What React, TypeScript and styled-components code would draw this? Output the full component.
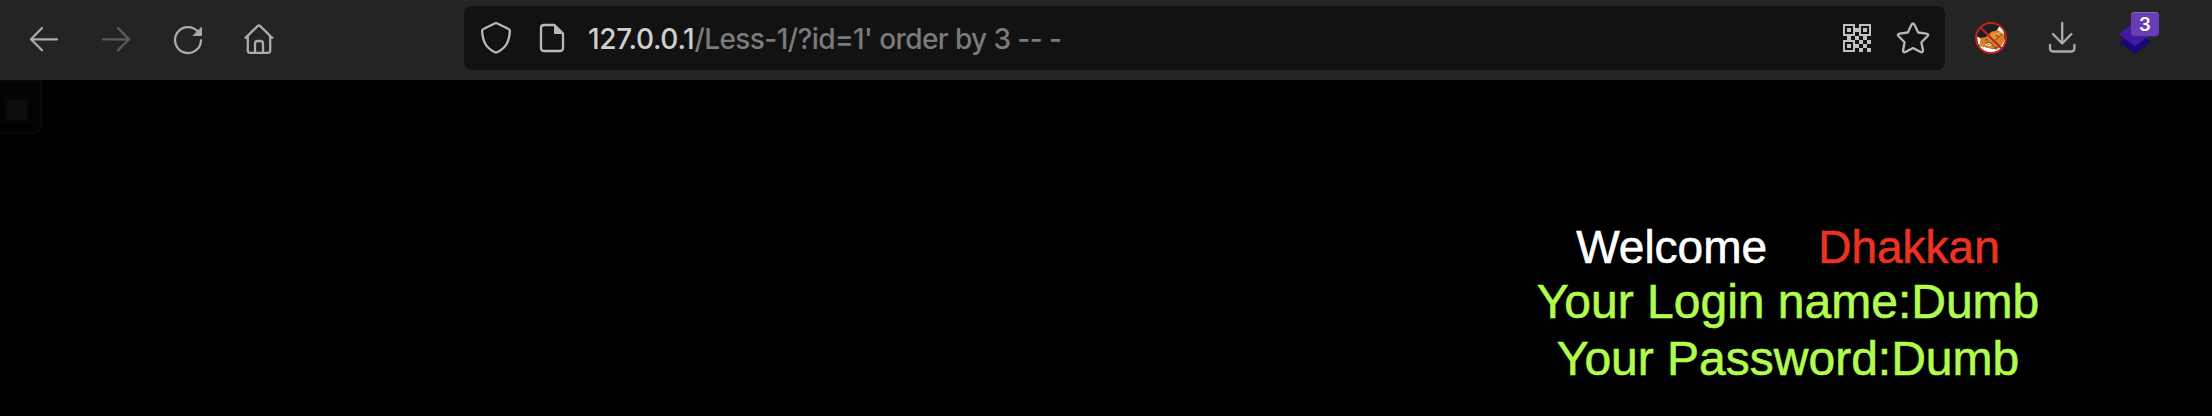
import React from "react";
import styled, { createGlobalStyle } from "styled-components";

const GlobalStyle = createGlobalStyle`
  * { box-sizing: border-box; }
  body { margin: 0; background: #000; overflow: hidden; }
`;

const Window = styled.div`
  display: flex;
  flex-direction: column;
  height: 416px;
  background: #000;
`;

const Toolbar = styled.header`
  display: flex;
  align-items: center;
  height: 80px;
  padding: 0 60px 0 28px;
  background: #242424;
`;

const NavButtons = styled.nav`
  display: flex;
  gap: 40px;
  width: 436px;
`;

const IconButton = styled.button<{ $color?: string }>`
  position: relative;
  display: flex;
  flex: none;
  width: 32px;
  height: 32px;
  padding: 0;
  border: 0;
  background: none;
  color: ${(p) => p.$color ?? "#ababab"};
`;

const Icon = styled.svg`
  width: 32px;
  height: 32px;
  overflow: visible;
  fill: none;
  stroke: currentColor;
  stroke-width: 2.3;
  stroke-linecap: round;
  stroke-linejoin: round;
`;

const AddressBar = styled.div`
  display: flex;
  align-items: center;
  width: 1481px;
  height: 64px;
  margin: 4px 0 8px;
  padding: 4px 16px 0;
  border-radius: 8px;
  background: #121212;
`;

const SiteInfo = styled.div`
  display: flex;
  gap: 24px;
`;

const Address = styled.div`
  flex: 1;
  margin: 0 0 2px 20px;
  font: 450 28px/40px Inter, "Liberation Sans", sans-serif;
  white-space: pre;
  color: #7b7b7b;
  letter-spacing: -0.58px;
`;

const Host = styled.span`
  color: #cfcfcf;
  font-weight: 500;
  letter-spacing: -0.3px;
`;

const PageActions = styled.div`
  display: flex;
  gap: 23px;
`;

const Extensions = styled.div`
  display: flex;
  gap: 40px;
  margin-left: 30px;
`;

const Badge = styled.span`
  position: absolute;
  top: -12px;
  left: 12px;
  width: 28px;
  height: 24px;
  border-radius: 4px;
  background: #663db5;
  box-shadow: inset 0 1px #8a66cf, 0 1px 1px #40247c;
  color: #fff;
  font: 600 18.5px/25px Inter, sans-serif;
  text-align: center;
`;

const Page = styled.main`
  display: flex;
  justify-content: space-between;
  flex: 1;
`;

const SideTab = styled.aside`
  width: 42px;
  height: 54px;
  padding: 18px 0 0 7px;
  border: solid #090909;
  border-width: 2px 2px 2px 0;
  border-radius: 0 0 9px 0;
  background: #020202;
`;

const TabMark = styled.div`
  width: 20px;
  height: 20px;
  background: #0d0d0d;
  box-shadow: 0 0 0 4px #050505;
`;

const Message = styled.section`
  width: 848px;
  padding-top: 140px;
  text-align: center;
  white-space: pre;
  font-family: "Liberation Sans", Arial, sans-serif;
  -webkit-text-stroke: 0.6px currentColor;
`;

const Greeting = styled.div`
  color: #fff;
  font-size: 46px;
  line-height: 54px;
`;

const Name = styled.span`
  color: #ea3323;
  -webkit-text-stroke-color: #ea3323;
`;

const Credential = styled.div`
  color: #b1fc4e;
  font-size: 48px;
  line-height: 56px;
  & + & {
    padding-top: 1px;
  }
`;

function QrIcon() {
  return (
    <Icon viewBox="0 0 32 32">
      <g fill="currentColor" stroke="none">
        <path fillRule="evenodd" d="M1 0h12v12H1zM3 2v8h8V2zM17 0h12v12H17zM19 2v8h8V2zM1 16h12v12H1zM3 18v8h8v-8z" />
        <path d="M5 4h4v4H5zM21 4h4v4h-4zM5 20h4v4H5zM13 4h4v4h-4zM5 12h4v4H5zM13 12h4v4h-4zM21 12h4v4h-4zM17 16h4v4h-4zM25 16h4v4h-4zM13 20h4v4h-4zM21 20h4v4h-4zM17 24h4v4h-4zM25 24h4v4h-4z" />
      </g>
    </Icon>
  );
}

function FoxIcon() {
  return (
    <Icon viewBox="0 0 32 32">
      <circle cx="16" cy="14" r="14.5" fill="#1f1f1f" stroke="none" />
      <g stroke="none">
        <path fill="#fff" d="M2 12.5 7 15 6 22 3 20zM21.5 7 24.5 2l4 3 .5 7zM4.5 21.5 14 24l10 2-6 3-7-.5-5-3zM22 25l8-10v3l-3 7-4 3z" />
        <path fill="#d98225" d="M5.5 14 11 13l5-5 7-2 6.5 5v6L25 24l-3 1-8-1-9.5-2z" />
        <path fill="#e3933a" d="M14 13l4-4 7-1 2 4-5 4-5 1z" />
        <path fill="#f6f6ef" d="M10 20.500l4-1.500 3 2-3 1z" />
      </g>
      <g stroke="#5b3a1d" strokeWidth="0.9">
        <path d="M10 16.5l1.5-1.5 1.5 1.5M20 16l3-2 4-4M21 12l1-1 1 2M11 19l3-1 4 3M18 22l3 2 2-1" />
        <path stroke="#344e50" d="M13 20.5h1" />
      </g>
      <circle cx="16" cy="14" r="15" stroke="#bd251b" strokeWidth="2" />
      <path stroke="#bd251b" strokeWidth="2" d="M5.5 3.5l21 21" />
    </Icon>
  );
}

export default function App() {
  return (
    <Window>
      <GlobalStyle />
      <Toolbar>
        <NavButtons>
          <IconButton aria-label="Back">
            <Icon viewBox="0 0 32 32"><path d="M29 15.3H3M14 4 3 15.3l11 11" /></Icon>
          </IconButton>
          <IconButton aria-label="Forward" $color="#5c5c5c">
            <Icon viewBox="0 0 32 32"><path d="M3 15.3h26M18 4l11 11.3-11 11" /></Icon>
          </IconButton>
          <IconButton aria-label="Reload">
            <Icon viewBox="0 0 32 32">
              <path d="M29 16.5A13 13 0 1 1 25.8 7.5" />
              <path d="M29.5 3.5v8h-8z" fill="currentColor" strokeWidth="1" />
            </Icon>
          </IconButton>
          <IconButton aria-label="Home">
            <Icon viewBox="0 0 32 32">
              <path d="M1.5 13.8 13.8 1.9q1.1-1.1 2.2 0l12.3 11.9M3.8 12v14.4q0 2.4 2.4 2.4h17.6q2.4 0 2.4-2.4V12M11 28.5V19.6q0-2.6 2.6-2.6h2.8q2.6 0 2.6 2.6v8.9" />
            </Icon>
          </IconButton>
        </NavButtons>
        <AddressBar>
          <SiteInfo>
            <IconButton aria-label="Tracking protection" $color="#b8b8b8">
              <Icon viewBox="0 0 32 32">
                <path d="M15.1-.7q.9-.5 1.8 0l11.7 5.7q1.3.6 1.3 1.9C29.3 17.5 26 24 17 28.3q-1 .5-2 0C6 24 2.7 17.5 2.1 6.9q0-1.3 1.3-1.9z" />
              </Icon>
            </IconButton>
            <IconButton aria-label="Site information" $color="#b8b8b8">
              <Icon viewBox="0 0 32 32">
                <path d="M18.5 1H8Q5 1 5 4v20q0 3 3 3h16q3 0 3-3V9.5z" />
                <path d="M18.5 1v8.5H27z" fill="currentColor" strokeWidth="1" />
              </Icon>
            </IconButton>
          </SiteInfo>
          <Address><Host>127.0.0.1</Host>/Less-1/?id=1' order by 3 -- -</Address>
          <PageActions>
            <IconButton aria-label="QR code" $color="#c0c0c0"><QrIcon /></IconButton>
            <IconButton aria-label="Bookmark" $color="#b8b8b8">
              <Icon viewBox="0 0 32 32">
                <path d="M14.5.8q1.5-2.6 3 0l3.7 7.7 8.2 1.1q2.9.6 1 2.7l-6 5.9 1.5 8q.2 2.8-2.4 1.8L16 24.1 8.5 28q-2.6 1-2.4-1.8l1.5-8-6-5.9q-1.9-2.1 1-2.7l8.2-1.1z" />
              </Icon>
            </IconButton>
          </PageActions>
        </AddressBar>
        <Extensions>
          <IconButton aria-label="Proxy disabled"><FoxIcon /></IconButton>
          <IconButton aria-label="Downloads">
            <Icon viewBox="0 0 32 32"><path d="M15.2-1v20.5M6 10l9.2 9.5L24.4 10M3 21v3.3q0 3.2 3.2 3.2h18q3.2 0 3.2-3.2V21" /></Icon>
          </IconButton>
          <IconButton aria-label="Layers">
            <Icon viewBox="0 0 32 32">
              <path d="M16 6l16 12-16 12L0 18z" fill="#1b0878" stroke="none" />
              <path d="M16-2l16 12-16 12L0 10z" fill="#4119a5" stroke="none" />
            </Icon>
            <Badge>3</Badge>
          </IconButton>
        </Extensions>
      </Toolbar>
      <Page>
        <SideTab><TabMark /></SideTab>
        <Message>
          <Greeting>Welcome{"\u00a0\u00a0\u00a0 "}<Name>Dhakkan</Name></Greeting>
          <Credential>Your Login name:Dumb</Credential>
          <Credential>Your Password:Dumb</Credential>
        </Message>
      </Page>
    </Window>
  );
}
